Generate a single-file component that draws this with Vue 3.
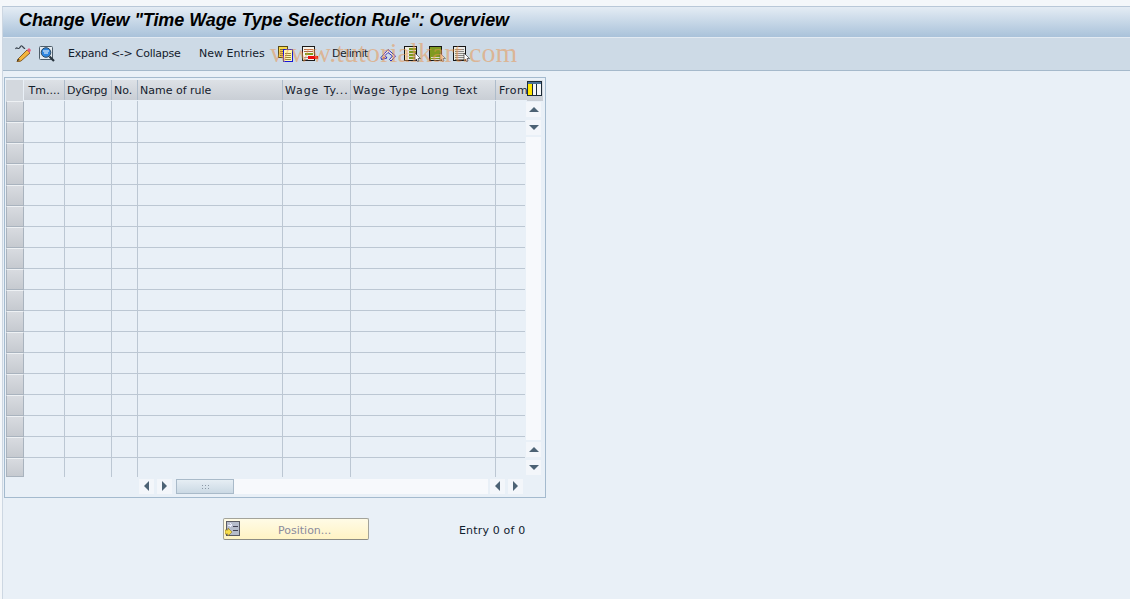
<script setup>
const columns = [
  { label: 'Tm....', width: 41, head: 41, cls: 'right' },
  { label: 'DyGrpg', width: 47, head: 47, cls: 'tight' },
  { label: 'No.', width: 26, head: 26 },
  { label: 'Name of rule', width: 145, head: 145 },
  { label: 'Wage Ty...', width: 68, head: 68, cls: 'wide-short' },
  { label: 'Wage Type Long Text', width: 145, head: 145, cls: 'wide-long' },
  { label: 'From', width: 29, head: 31, cls: 'wide-long' }
]
const rows = Array.from({ length: 18 }, (_, i) => i)
</script>

<template>
  <div class="page">
    <div class="shell">
      <div class="title"><h1>Change View "Time Wage Type Selection Rule": Overview</h1></div>
      <div class="toolbar">
        <svg class="ic first" viewBox="0 0 16 18" width="16" height="18">
          <path d="M0.5 5C2 2 3 6 4.500 4S6 1 7.500 2.500 9 5 10 4" fill="none" stroke="#38424c" stroke-width="1.100"/>
          <path d="M3 15l9-9 3 3-9 8-4 1z" fill="#f4b53e" stroke="#6e4412" stroke-width=".8"/>
          <path d="M12 6l2-2 2 2-1.500 3z" fill="#e8607c"/>
          <path d="M3 15l-1 2 3-1z" fill="#222"/>
        </svg>
        <svg class="ic second" viewBox="0 0 16 16" width="16" height="16">
          <rect x=".5" y=".5" width="13" height="13" rx="1" fill="#e4ebf1" stroke="#4d5c69"/>
          <circle cx="7" cy="6.500" r="4.800" fill="#2f86e0" stroke="#2c475e"/>
          <path d="M4 5h6M5 7h4" stroke="#fff"/>
          <path d="M10.500 10.500l4.500 4.500" stroke="#28343e" stroke-width="2.200"/>
        </svg>
        <span class="tb-text expand">Expand &lt;-&gt; Collapse</span>
        <span class="tb-text entries">New Entries</span>
        <svg class="ic copy" viewBox="0 0 16 16" width="16" height="16" shape-rendering="crispEdges">
          <rect x=".5" y=".5" width="9" height="11" fill="#f8d84a" stroke="#5c4c18"/>
          <path d="M2 3h6M2 5h6M2 7h6M2 9h6" stroke="#7e6e2a"/>
          <rect x="5.500" y="3.500" width="9" height="11.500" fill="#fff7b4" stroke="#1416d8"/>
          <path d="M7 7h6M7 9h6M7 11h6M7 13h6" stroke="#9a8a3c"/>
        </svg>
        <svg class="ic del" viewBox="0 0 16 16" width="16" height="16" shape-rendering="crispEdges">
          <rect x=".5" y=".5" width="12" height="14" fill="#f6f4ec" stroke="#1a1a1a"/>
          <path d="M2 3h9M2 5h9" stroke="#b4664a"/>
          <path d="M3 8h8" stroke="#7f9a20" stroke-width="2"/>
          <path d="M2 11h4M2 13h4" stroke="#999"/>
          <rect x="6" y="10" width="10" height="3" fill="#ec0b0b"/>
        </svg>
        <span class="tb-text delimit">Delimit</span>
        <svg class="ic undo" viewBox="0 0 16 16" width="16" height="16">
          <path d="M1 11.500L8 3.500l7.500 6.500-4.500 5-1.500-1.500 3-3.500L8 6.500 5 9.500l2 2.500-5.500 1.500z" fill="#f5ebe0" stroke="#1818b8" stroke-width=".9"/>
          <path d="M2.500 12l3-1" stroke="#a63b2a" stroke-width=".8"/>
        </svg>
        <svg class="ic sel" viewBox="0 0 17 16" width="17" height="16" shape-rendering="crispEdges">
          <rect x=".5" y=".5" width="12" height="14" fill="#f0eee0" stroke="#151515"/>
          <rect x="5" y="2" width="7" height="11" fill="#7f9a20"/>
          <path d="M2 4h10M2 7h10M2 10h10" stroke="#d9d9c8"/>
          <path shape-rendering="auto" d="M11 7l5.500 5.500H14l1 2.500-1.500.5-1-2.500L11 15z" fill="#fff" stroke="#1d1d1d" stroke-width=".6"/>
        </svg>
        <svg class="ic sel2" viewBox="0 0 17 16" width="17" height="16" shape-rendering="crispEdges">
          <rect x=".5" y=".5" width="12" height="14" fill="#7f9a20" stroke="#151515"/>
          <path d="M2 11h10M2 13h10" stroke="#dcdcd0"/>
          <path shape-rendering="auto" d="M11 7l5.500 5.500H14l1 2.500-1.500.5-1-2.500L11 15z" fill="#f8d8ae" stroke="#5a5a5a" stroke-width=".6"/>
        </svg>
        <svg class="ic sel3" viewBox="0 0 17 16" width="17" height="16" shape-rendering="crispEdges">
          <rect x=".5" y=".5" width="12" height="14" fill="#ecece8" stroke="#151515"/>
          <path d="M2 3h9M2 5h9M2 7h9M2 9h9M2 11h9M2 13h9" stroke="#8a8a86"/>
          <path shape-rendering="auto" d="M11 7l5.500 5.500H14l1 2.500-1.500.5-1-2.500L11 15z" fill="#fff" stroke="#1d1d1d" stroke-width=".6"/>
        </svg>
        <span class="watermark">www.tutorialkart.com</span>
      </div>

      <div class="content">
        <div class="table-box">
          <div class="grid-area">
            <div class="grid-main">
              <div class="hrow">
                <div class="corner"></div>
                <div
                  v-for="c in columns"
                  :key="c.label"
                  class="hcell"
                  :class="c.cls"
                  :style="{ width: c.head + 'px' }"
                >{{ c.label }}</div>
              </div>
              <div v-for="r in rows" :key="r" class="drow" :class="{ last: r === 17 }">
                <div class="selector"></div>
                <div
                  v-for="c in columns"
                  :key="c.label"
                  class="dcell"
                  :style="{ width: c.width + 'px' }"
                ></div>
              </div>
            </div>
            <div class="vscroll">
              <div class="cfg">
                <svg viewBox="0 0 15 15" width="15" height="15" shape-rendering="crispEdges">
                  <rect x="0" y="0" width="15" height="15" fill="#1c2a36"/>
                  <rect x="1" y="1" width="13" height="2" fill="#4a7196"/>
                  <rect x="1" y="3" width="4" height="11" fill="#ffe600"/>
                  <rect x="6" y="3" width="3" height="11" fill="#f4f6f8"/>
                  <rect x="10" y="3" width="4" height="11" fill="#f4f6f8"/>
                </svg>
              </div>
              <div class="sbtn up-btn"><i class="tri up"></i></div>
              <div class="sbtn dn-btn"><i class="tri down"></i></div>
              <div class="vtrack"></div>
              <div class="sbtn up-btn"><i class="tri up"></i></div>
              <div class="sbtn dn-btn"><i class="tri down"></i></div>
            </div>
          </div>
          <div class="hscroll">
            <div class="sbtn h"><i class="tri left"></i></div>
            <div class="sbtn h"><i class="tri right"></i></div>
            <div class="thumb"><span class="grip"></span></div>
            <div class="htrack"></div>
            <div class="sbtn h"><i class="tri left"></i></div>
            <div class="sbtn h"><i class="tri right"></i></div>
          </div>
        </div>

        <div class="footer">
          <button class="pos-btn" type="button">
            <svg viewBox="0 0 16 16" width="16" height="16" shape-rendering="crispEdges">
              <rect x="1.500" y=".5" width="13" height="14" fill="#b6bccb" stroke="#5a5a62"/>
              <path d="M8 5h5M8 9h5" stroke="#445"/>
              <path d="M3 4h3M5 2l2 2-2 2" stroke="#eef" fill="none"/>
              <path shape-rendering="auto" d="M0 9h3V7l4 4-4 4v-2H0z" fill="#f6dc4c" stroke="#8a7420" stroke-width=".6"/>
            </svg>
            <span>Position...</span>
          </button>
          <span class="entry">Entry 0 of 0</span>
        </div>
      </div>
    </div>
  </div>
</template>

<style>
html, body { margin: 0; background: #f4f7fa; }
</style>

<style scoped>
.page {
  box-sizing: border-box;
  width: 1130px;
  height: 599px;
  padding: 6px 0 0 2px;
  overflow: hidden;
  background: #f4f7fa;
  font-family: "DejaVu Sans", Verdana, sans-serif;
  font-size: 11px;
  color: #10202e;
}
.shell {
  height: 593px;
  border-left: 1px solid #cdd7e2;
  border-top: 1px solid #b9c8d8;
  background: #e9f0f7;
}
.title {
  box-sizing: border-box;
  height: 30px;
  padding: 0 0 3px 16px;
  display: flex;
  align-items: center;
  background: linear-gradient(#e4ecf4, #a9c2da);
}
.title h1 {
  margin: 0;
  font: italic bold 18px "Liberation Sans", Arial, sans-serif;
  letter-spacing: -0.08px;
  color: #000;
  white-space: nowrap;
}
.toolbar {
  position: relative;
  box-sizing: border-box;
  height: 34px;
  display: flex;
  align-items: center;
  background: #cddae6;
  border-top: 1px solid #e2eaf2;
  border-bottom: 1px solid #a5b9cb;
}
.tb-text { flex: none; margin-top: -2px; white-space: nowrap; color: #14202c; }
.ic { flex: none; display: block; }
.first { margin-left: 12px; margin-top: -3px; }
.second { margin-left: 8px; }
.expand { margin-left: 13px; width: 113px; letter-spacing: -0.25px; }
.entries { margin-left: 18px; width: 67px; }
.copy { margin-left: 12px; }
.del { margin-left: 8px; }
.delimit { margin-left: 14px; width: 35px; letter-spacing: -0.5px; }
.undo { margin-left: 13px; }
.sel { margin-left: 8px; }
.sel2 { margin-left: 8px; }
.sel3 { margin-left: 7px; }
.watermark {
  position: absolute;
  left: 267px;
  top: 1px;
  font: 28px/28px "Liberation Serif", serif;
  letter-spacing: 0.1px;
  color: rgba(232, 150, 80, 0.55);
  white-space: nowrap;
  pointer-events: none;
}
.content { padding: 6px 0 0 1px; }
.table-box {
  box-sizing: border-box;
  width: 542px;
  height: 421px;
  border: 1px solid #a4bace;
  padding: 2px 0 0 1px;
  background: #e9f0f7;
}
.grid-area { display: flex; height: 397px; }
.grid-main { flex: none; width: 521px; overflow: hidden; }
.hrow { display: flex; height: 21px; }
.corner {
  flex: none;
  width: 18px;
  background: #d3d8de;
  border-right: 1px solid #e9f0f7;
  box-sizing: border-box;
}
.hcell {
  box-sizing: border-box;
  flex: none;
  height: 20px;
  padding-left: 2px;
  line-height: 22px;
  overflow: hidden;
  white-space: nowrap;
  background: linear-gradient(#dde1e6, #c9ced5);
  border-right: 1px solid #aebccb;
  color: #14202c;
}
.hcell.right { text-align: right; padding: 0 4px 0 0; }
.hcell.tight { letter-spacing: -0.3px; }
.hcell.wide-short { letter-spacing: 0.9px; }
.hcell.wide-long { letter-spacing: 0.5px; }
.hcell:last-child { border-right: 0; padding-left: 3px; }
.drow { display: flex; height: 21px; }
.selector {
  box-sizing: border-box;
  flex: none;
  width: 18px;
  height: 21px;
  border: 1px solid #a9b3be;
  border-top-color: #eef1f4;
  background: linear-gradient(#d8dbe0, #c6cad0);
}
.dcell {
  box-sizing: border-box;
  flex: none;
  height: 21px;
  border-right: 1px solid #bcc7d3;
  border-bottom: 1px solid #bcc7d3;
}
.dcell:last-child { border-right: 0; }
.drow.last { height: 19px; }
.drow.last .selector { height: 19px; }
.drow.last .dcell { border-bottom: 0; height: 19px; }
.vscroll {
  flex: none;
  width: 16px;
  display: flex;
  flex-direction: column;
}
.cfg {
  height: 21px;
  margin-bottom: 1px;
  display: flex;
  justify-content: flex-start;
  padding-top: 1px;
  box-sizing: border-box;
  background: linear-gradient(#dde1e6, #c9ced5);
}
.sbtn {
  flex: none;
  display: flex;
  align-items: center;
  justify-content: center;
  background: #f3f6fa;
}
.up-btn { width: 15px; height: 15px; margin: 0 0 3px -1px; }
.dn-btn { width: 15px; height: 15px; margin-left: -1px; }
.vtrack { width: 15px; height: 303px; margin: 2px 0 2px -1px; background: #f7f9fc; }
.tri { display: block; width: 0; height: 0; border: 0 solid transparent; }
.tri.up { border-width: 0 5px 5px; border-bottom-color: #4c6274; }
.tri.down { border-width: 5px 5px 0; border-top-color: #4c6274; }
.tri.left { border-width: 5px 5px 5px 0; border-right-color: #4c6274; }
.tri.right { border-width: 5px 0 5px 5px; border-left-color: #4c6274; }
.hscroll {
  display: flex;
  height: 15px;
  margin-top: 2px;
  padding-left: 133px;
  align-items: stretch;
}
.sbtn.h { width: 15px; margin-right: 3px; box-sizing: border-box; padding-bottom: 2px; }
.thumb {
  box-sizing: border-box;
  flex: none;
  width: 58px;
  margin-left: 1px;
  border: 1px solid #a9bac9;
  background: linear-gradient(#e6eef4, #cbd9e4);
  display: flex;
  align-items: center;
  justify-content: center;
}
.grip {
  width: 9px;
  height: 6px;
  background-image: radial-gradient(circle, #8b99a6 0.8px, transparent 1px);
  background-size: 3px 3px;
}
.htrack { flex: none; width: 254px; background: #f7f9fc; margin-right: 2px; }
.footer {
  display: flex;
  align-items: center;
  height: 22px;
  margin-top: 20px;
}
.pos-btn {
  box-sizing: border-box;
  width: 146px;
  height: 22px;
  margin-left: 219px;
  padding: 0 0 0 1px;
  display: flex;
  align-items: center;
  border: 1px solid #a3a39a;
  border-bottom-color: #8c8c84;
  border-radius: 2px;
  background: linear-gradient(#fffbe6, #fff3c4);
  font: inherit;
  color: #8b8b9c;
}
.pos-btn span { margin: 2px 0 0 37px; }
.entry { margin: 2px 0 0 90px; letter-spacing: 0.17px; color: #10202e; }
</style>
